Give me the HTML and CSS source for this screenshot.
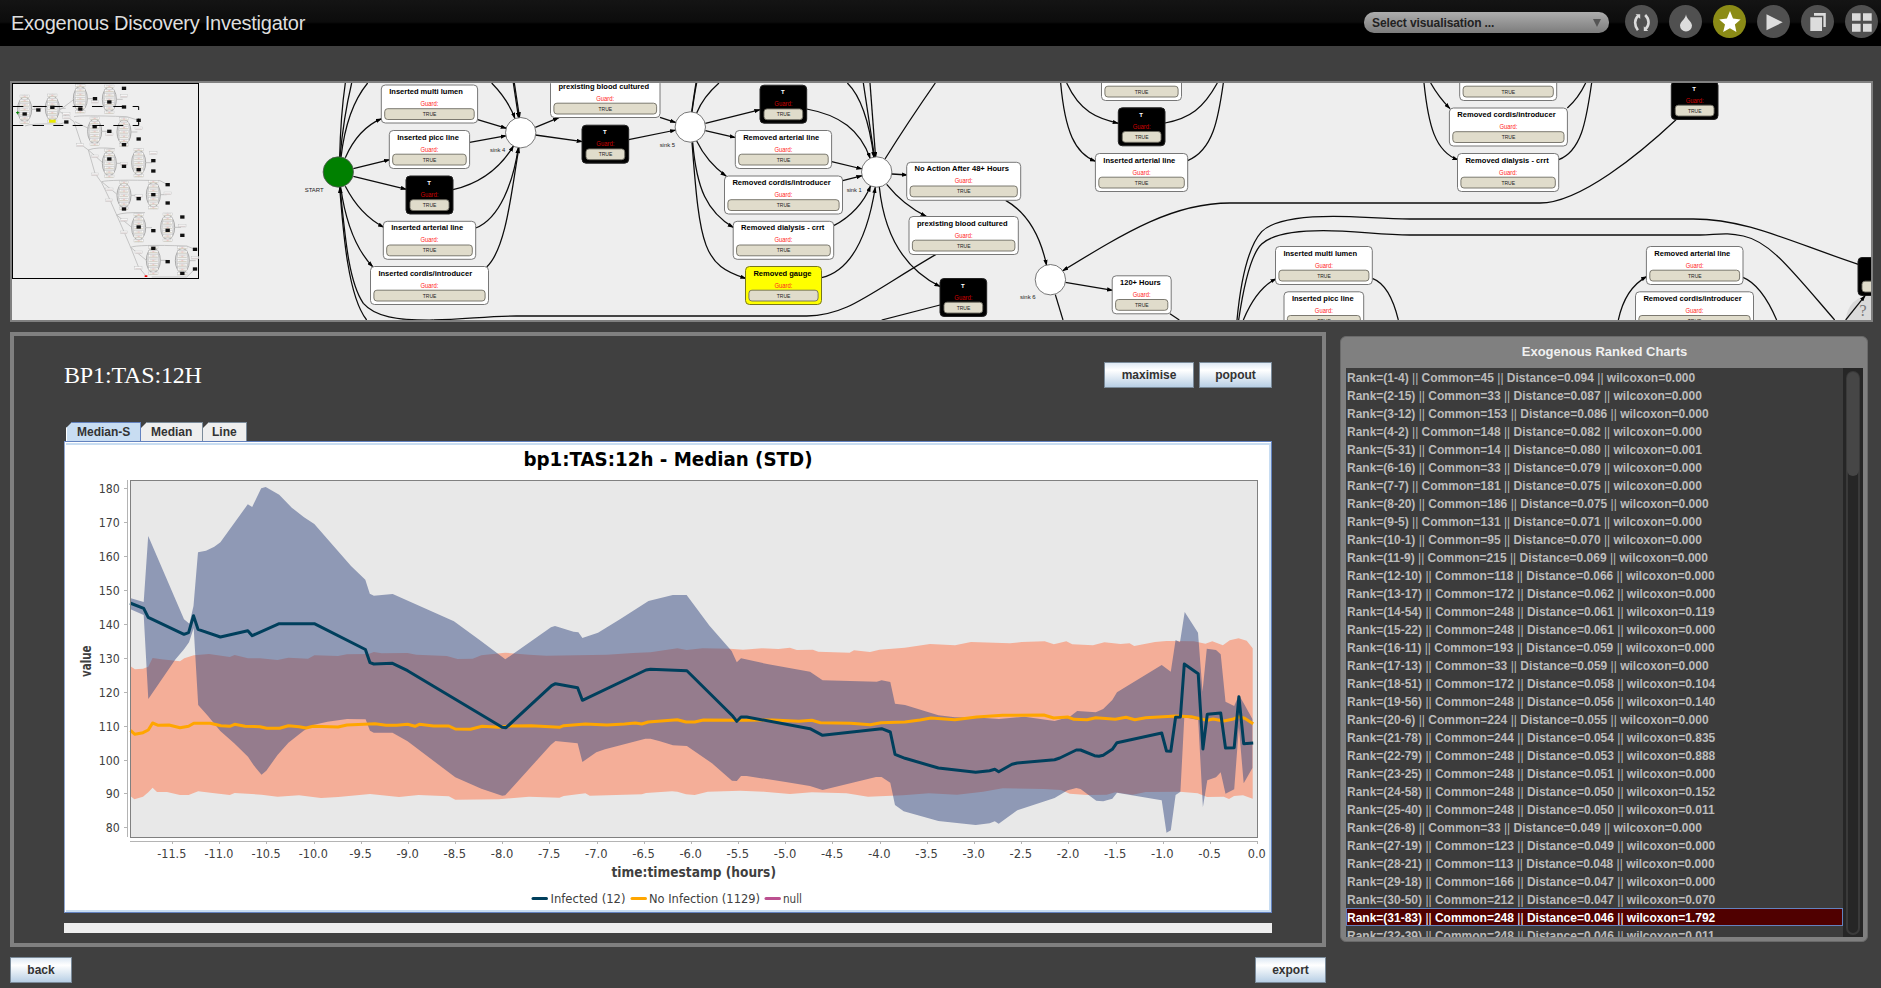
FILE: index.html
```html
<!DOCTYPE html>
<html lang="en">
<head>
<meta charset="utf-8">
<title>Exogenous Discovery Investigator</title>
<link rel="stylesheet" href="styles.css">
</head>
<body>
<header class="topbar">
  <h1 class="app-title">Exogenous Discovery Investigator</h1>
  <div class="combo"><span class="combo-text">Select visualisation ...</span><svg class="combo-arrow" viewBox="0 0 8 8"><path d="M0 0H8L4 8Z"/></svg></div>
  <nav class="tools">
    <svg class="tool" viewBox="0 0 33 33"><circle cx="16.5" cy="16.5" r="16.5"/><path class="arc" d="M13.4 10.8C9 14.2 9.2 20.6 12.9 25.2M20.2 10C24.6 14.4 24.6 20.4 20.6 24"/><path class="ink" d="M10.6 9.2H15.2V14ZM23.2 26H18.8V21.200Z"/></svg>
    <svg class="tool" viewBox="0 0 33 33"><circle cx="16.5" cy="16.5" r="16.5"/><path class="ink" d="M17 9.2C17.4 14 23 16.5 23 20.6A6 5.9 0 0 1 11 20.6C11 16.5 16.6 14 17 9.2Z"/></svg>
    <svg class="tool on" viewBox="0 0 33 33"><circle cx="16.5" cy="16.5" r="16.5"/><path class="ink" d="M17 6L20 13.4L27.6 14.6L21.9 19.4L23.4 27L16.9 23.2L10.2 27L12 19.4L6.2 14.6L13.9 13.4Z"/></svg>
    <svg class="tool" viewBox="0 0 33 33"><circle cx="16.5" cy="16.5" r="16.5"/><path class="ink" d="M9.5 9.3L25.7 17.3L9.5 25.3Z"/></svg>
    <svg class="tool" viewBox="0 0 33 33"><circle cx="16.5" cy="16.5" r="16.5"/><path class="ink" d="M13 8H24.8V22H22.4V10.8H13ZM9.3 12.2H21V26H9.3Z"/></svg>
    <svg class="tool" viewBox="0 0 33 33"><circle cx="16.5" cy="16.5" r="16.5"/><path class="ink" d="M7 8.3H15.6V15.8H7ZM18 8.3H26.7V15.8H18ZM7 18.7H15.6V26.8H7ZM18 18.7H26.7V26.8H18Z"/></svg>
  </nav>
</header>

<section class="graph-panel"><svg id="graph" class="graph" viewBox="12 83 1859 237"></svg></section>

<main class="workspace">
  <div class="left">
    <section class="chart-panel">
      <div class="chart-head">
        <h2 class="series-title">BP1:TAS:12H</h2>
        <button class="btn maximise">maximise</button>
        <button class="btn popout">popout</button>
      </div>
      <div class="tabs">
        <div class="tab active">Median-S</div>
        <div class="tab t2">Median</div>
        <div class="tab t3">Line</div>
      </div>
      <div class="pane"><div class="pane-inner"><svg id="chart" class="chart" viewBox="66 445 1203 465"></svg></div></div>
      <div class="strip"></div>
    </section>
    <footer class="actions"><button class="btn back">back</button><button class="btn export">export</button></footer>
  </div>
  <aside class="ranks">
    <h3 class="ranks-title">Exogenous Ranked Charts</h3>
    <div class="ranks-body">
      <ul id="list" class="rank-list"></ul>
      <div class="scroll"><div class="track"><div class="thumb"></div></div></div>
    </div>
  </aside>
</main>
<script src="app.js"></script>
</body>
</html>
```

FILE: styles.css
```css
* { box-sizing: border-box; }
body { margin: 0; width: 1881px; height: 988px; overflow: hidden; background: #404040; font-family: "Liberation Sans", Arial, sans-serif; }
h1, h2, h3, ul { margin: 0; padding: 0; font-weight: normal; }

.topbar { display: flex; align-items: flex-start; height: 46px; padding: 0 3px 0 11px; background: linear-gradient(#141414 0, #0c0c0c 22px, #000 24px); }
.app-title { flex: 1; font-size: 20px; line-height: 46px; color: #dedede; letter-spacing: -0.26px; white-space: nowrap; }
.combo { display: flex; align-items: center; justify-content: space-between; width: 245px; height: 21px; margin-top: 12px; padding: 0 8px; border-radius: 10px; background: linear-gradient(#adadad, #7c7c7c); }
.combo-text { font-size: 12px; font-weight: bold; letter-spacing: -.1px; color: #222; white-space: nowrap; }
.combo-arrow { width: 8px; height: 8px; fill: #555; }
.tools { display: flex; gap: 11px; margin: 5px 0 0 16px; }
.tool { width: 33px; height: 33px; }
.tool circle { fill: #505050; }
.tool .ink { fill: #dcdcdc; }
.tool .arc { fill: none; stroke: #dcdcdc; stroke-width: 2.6; }
.tool.on circle { fill: #8b8b16; }
.tool.on .ink { fill: #fff; }

.graph-panel { width: 1863px; height: 241px; margin: 35px 0 0 10px; border: 2px solid #808080; background: #eee; }
.graph { display: block; width: 1859px; height: 237px; }
.edge { fill: none; stroke: #0c0c0c; stroke-width: 3.8; }
.place { fill: #fff; stroke: #555; stroke-width: .8; }
.place.start { fill: #008000; }
.box { fill: #fff; stroke: #777; stroke-width: 1; }
.silent .box { fill: #000; stroke: #222; }
.hot .box { fill: #ff0; stroke: #77771c; }
.pill { fill: #e0dccb; stroke: #6e6c62; stroke-width: .9; }
.name { font-size: 7.6px; font-weight: bold; fill: #000; }
.silent .name { fill: #fff; font-size: 6px; }
.guard { font-size: 6.3px; fill: #f22; }
.silent .guard { fill: #d00000; }
.true { font-size: 5.6px; fill: #222; }
.sink { font-size: 6.2px; fill: #222; }
.help { fill: #dadada; }
.help-mark { font-family: "Liberation Serif", serif; font-size: 16px; fill: #777; }

.workspace { display: flex; gap: 14px; margin: 10px 0 0 10px; }
.left { width: 1316px; }
.chart-panel { height: 615px; border: 4px solid #808080; padding: 26px 50px 0; }
.chart-head { display: flex; align-items: flex-start; height: 60px; }
.series-title { flex: 1; font-family: "Liberation Serif", serif; font-size: 24px; line-height: 27px; color: #fff; letter-spacing: -.15px; }
.btn { height: 26px; padding: 0; border: 1px solid #7a8a99; background: linear-gradient(#dde8f3, #fff 30%, #b8cfe5); font: bold 12px "Liberation Sans", Arial, sans-serif; color: #333; }
.maximise { width: 90px; }
.popout { width: 73px; margin-left: 5px; }
.tabs { display: flex; height: 19px; padding-left: 2px; }
.tab { height: 19px; border: 1px solid #7a8a99; border-bottom: 0; border-left: 0; background: #eee; width: 62px; padding-left: 10px; font-size: 12px; font-weight: bold; line-height: 18px; color: #333; clip-path: polygon(0 6px, 6px 0, 100% 0, 100% 100%, 0 100%); }
.tab.active { width: 75px; padding-left: 10px; background: #c8ddf2; border-color: #6382bf; border-left: 1px solid #fff; }
.tab.t3 { width: 44px; padding-left: 9px; }
.pane { height: 472px; border: 1px solid #6382bf; border-left-color: #8fa6d0; padding: 1px 0 0 1px; background: #fff; }
.pane-inner { height: 469px; border: solid #c8ddf2; border-width: 2px 2px 2px 0; }
.chart { display: block; width: 1203px; height: 465px; font-family: "DejaVu Sans Condensed", "DejaVu Sans", sans-serif; }
.strip { height: 10px; margin-top: 10px; background: #eee; }
.actions { display: flex; justify-content: space-between; margin-top: 10px; }
.back { width: 62px; }
.export { width: 71px; }

.plot { fill: #e8e8e8; }
.frame { fill: none; stroke: #808080; }
.axis { fill: none; stroke: #b4b4b4; }
.tick { font-size: 12px; fill: #404040; }
.caption { font-size: 14px; font-weight: bold; fill: #404040; }
.heading { font-size: 20px; font-weight: bold; fill: #000; }
.band-none { fill: #f4ae98; }
.band-inf { fill: rgba(54, 74, 130, .5); }
.line { fill: none; stroke-width: 3; stroke-linejoin: round; }
.c-inf { stroke: #003f5c; }
.c-none { stroke: #ffa600; }
.c-null { stroke: #bc5090; }

.ranks { width: 528px; height: 606px; margin-top: 4px; padding: 0 4px 0 5px; border: 1px solid #6a6a6a; border-radius: 6px; background: #808080; }
.ranks-title { height: 31px; font-size: 13px; font-weight: bold; line-height: 29px; text-align: center; color: #f0f0f0; }
.ranks-body { display: flex; height: 569px; overflow: hidden; background: #3c3c3c; }
.rank-list { width: 497px; list-style: none; }
.rank-list li { height: 18px; padding-left: 1px; font-size: 12px; font-weight: bold; line-height: 20px; color: #bbb; white-space: nowrap; }
.rank-list li.sel { padding-left: 0; border: 1px solid #6382bf; line-height: 18px; background: #500000; color: #fff; }
.bar { font-weight: normal; }
.scroll { width: 20px; padding: 3px 3px 2px; background: #262626; }
.track { height: 564px; border: 2px solid #3a3a3a; border-radius: 7px; }
.thumb { height: 104px; margin: -1px; border-radius: 6px; background: #464646; }
```

FILE: app.js
```javascript
// ---------- process graph ----------
const WIDTHS = {
  'Inserted multi lumen': 73.7, 'Inserted picc line': 61.7, 'Inserted arterial line': 72,
  'Inserted cordis/introducer': 93.7, 'prexisting blood cultured': 90.7, 'Removed arterial line': 76,
  'Removed cordis/introducer': 98.3, 'Removed dialysis - crrt': 83.3, 'Removed gauge': 58,
  'No Action After 48+ Hours': 94.3, '120+ Hours': 40.7
};
const NODES = [
  [381.3, 85, 96.3, 'Inserted multi lumen'], [389.3, 130.5, 80.3, 'Inserted picc line'], [406, 176, 47, 'T'],
  [383.3, 221.3, 92.4, 'Inserted arterial line'], [370.5, 266.5, 118, 'Inserted cordis/introducer'],
  [550.5, 79.5, 109.5, 'prexisting blood cultured'], [582, 125.2, 46.7, 'T'],
  [760, 85.2, 46.7, 'T'], [735.3, 130.5, 96.3, 'Removed arterial line'], [724.5, 176, 118, 'Removed cordis/introducer'],
  [733.2, 221.3, 100.5, 'Removed dialysis - crrt'], [745.5, 266.5, 76, 'Removed gauge', 'hot'],
  [906.7, 162.3, 114, 'No Action After 48+ Hours'], [909, 216.5, 109.3, 'prexisting blood cultured'], [940, 278.5, 46.7, 'T'],
  [1101.5, 62.5, 80, ''], [1118.3, 107.8, 46.7, 'T'], [1095.4, 153.5, 92.3, 'Inserted arterial line'],
  [1112.2, 275.8, 59, '120+ Hours'], [1275.5, 246.5, 96.8, 'Inserted multi lumen'], [1284, 291.8, 79.7, 'Inserted picc line'],
  [1459.7, 62.5, 97, ''], [1449.4, 108, 118, 'Removed cordis/introducer'], [1457.5, 153.5, 101.2, 'Removed dialysis - crrt'],
  [1671.3, 81.5, 46.7, 'T'], [1646.4, 246.5, 96.6, 'Removed arterial line'], [1635.5, 291.8, 118, 'Removed cordis/introducer']
];
// Each group has its own origin; a leading ">" gives the edge an arrowhead.
const EDGES = [
  [300, ['M119 247Q122 120 136 24', 'M120 247Q130 130 155 24', 'M123 247Q140 100 203 24', '>M136 248Q175 160 245 131', '>M160 281L270 254',
    '>M160 304L320 343', '>M136 334Q180 420 252 457', '>M122 336Q145 500 219 576', '>M200 735C145 665 130 480 119 336',
    '>M400 735C290 736 225 725 190 685C145 620 135 480 120 336', 'M400 735C500 733 560 723 650 723L1520 723C1640 722 1700 660 1908 538',
    '>M533 134L620 160', '>M509 202L620 182', '>M459 344C540 325 600 280 641 212', '>M527 459C600 430 640 320 655 217',
    '>M560 576C620 520 635 340 657 217', '>M575 24Q625 75 645 131', '>M640 24L656 130', '>M643 24L659 130',
    '>M706 157L777 128', '>M706 180L848 200', '>M1080 127L1128 143', '>M986 194L1128 165']],
  [680, ['M35 111Q42 60 48 24', 'M36 111Q43 60 50 24', 'M50 114Q70 65 117 24', '>M76 145L241 104', '>M76 167L167 188', '>M50 198Q80 260 139 304',
    '>M38 202C50 340 80 410 161 458', '>M36 202C60 520 70 570 199 611', '>M380 102C480 120 540 165 571 251', '>M455 260L547 282',
    '>M488 317L547 302', '>M461 452Q540 410 572 332', '>M425 608C520 585 565 470 586 336', '>M502 24Q560 80 582 249',
    '>M550 24L584 249', '>M570 24L587 249', 'M615 252C660 180 720 90 766 24', '>M636 297L684 300', '>M620 328Q670 390 739 424',
    '>M598 336C615 500 690 590 781 635', '>M977 376Q1070 430 1100 572', 'M780 690L605 735']],
  [1040, ['>M76 622L219 646', 'M46 659L69 735', '>M80 24C120 110 170 130 236 145', '>M62 24C75 170 105 235 167 259',
    'M375 144C450 130 490 100 532 24', 'M443 257C520 225 535 130 550 24', '>M1908 134C1800 235 1620 384 1500 384L570 384C400 384 260 470 67 588',
    'M591 735C600 640 620 520 665 470C700 435 780 424 880 424C960 424 1020 431 1110 432L1960 432C2120 432 2250 500 2455 568',
    'M596 735C610 640 630 540 665 507C700 475 780 467 850 467C940 467 1020 479 1110 480L1980 480C2040 478 2060 472 2110 483C2190 500 2250 580 2384 735',
    '>M610 735Q650 640 709 611', 'M390 716L418 735', 'M997 610Q1050 630 1075 735']],
  [1400, ['>M72 24C85 150 105 230 175 255', '>M92 24Q115 65 150 101', 'M502 99Q535 70 557 24', 'M476 254C550 225 560 120 575 24',
    '>M655 735Q675 640 741 604', 'M1029 607Q1085 630 1130 735']]
];
const PLACES = [[338.3, 172, 'START', 304.7, 191.7, 19], [520.7, 132.7, 'sink 4', 490, 152.3, 15.3], [690.3, 127, 'sink 5', 659.7, 146.7, 15.3],
  [876.7, 172, 'sink 1', 846.7, 192, 15], [1050.4, 279.7, 'sink 6', 1020, 299.3, 15.6]];

function nodeSvg([x, y, w, label, kind]) {
  const silent = label === 'T';
  const cx = x + w / 2;
  const inset = silent ? 4 : 3.4;
  let text = '';
  if (silent) text = `<text class="name" x="${cx - .5}" y="${y + 9}" text-anchor="middle">T</text>`;
  else if (label) text = `<text class="name" x="${x + 7.9}" y="${y + 9}" textLength="${WIDTHS[label]}" lengthAdjust="spacingAndGlyphs">${label}</text>`;
  if (label) text += `<text class="guard" x="${cx - 9}" y="${y + 21}" textLength="18" lengthAdjust="spacingAndGlyphs">Guard:</text>`;
  return `<g class="${silent ? 'silent' : kind || ''}"><rect class="box" x="${x}" y="${y}" width="${w}" height="38" rx="4"/>${text}
    <rect class="pill" x="${x + inset}" y="${y + 23.7}" width="${w - inset * 2}" height="10.8" rx="3"/>
    <text class="true" x="${cx - 6.7}" y="${y + 31}" textLength="13.6" lengthAdjust="spacingAndGlyphs">TRUE</text></g>`;
}

function minimap() {
  const ovals = [[74, 328], [157, 325], [241, 296], [328, 298], [284, 394], [372, 396], [328, 490], [416, 488], [372, 586], [460, 584], [416, 683], [503, 682], [460, 781], [547, 782]];
  const black = [[74, 342], [115, 330], [157, 322], [199, 366], [241, 327], [285, 296], [328, 306], [372, 265], [372, 321], [416, 361], [284, 380], [328, 394], [372, 434], [416, 417], [328, 477], [372, 499], [416, 509], [460, 482], [460, 513], [416, 596], [372, 627], [460, 584], [503, 554], [503, 609], [416, 681], [460, 692], [503, 691], [547, 651], [547, 706], [460, 745], [503, 785], [547, 820], [585, 748], [585, 807]];
  const small = [[240, 435], [285, 523], [327, 601], [372, 697], [415, 804], [199, 342], [199, 352], [372, 288], [416, 385], [460, 459], [503, 580], [547, 677], [585, 773], [285, 469], [328, 568], [372, 660], [416, 757], [115, 322], [285, 305], [328, 403], [372, 491], [416, 588]];
  let s = '<g transform="scale(.33333)"><rect x="37.5" y="250.5" width="558" height="585" fill="#eee" stroke="#000" stroke-width="3"/>';
  s += '<path d="M222 365L245 435L265 450L285 520L305 548L330 600L350 645L372 695L392 742L415 800L438 828M180 330L222 298M180 335L222 365M222 350Q240 345 380 350L416 361M265 450Q290 440 345 446M305 545Q330 538 480 542L503 554M350 645Q370 636 435 638M392 742Q410 733 560 738L585 748M455 831H560L585 807M225 365L265 385M265 450L308 488M305 545L350 582M350 645L395 682M392 742L438 780M75 378Q90 370 180 372L199 366" fill="none" stroke="#b4b4b4" stroke-width="2.200"/>';
  for (const [x, y] of ovals) {
    s += `<ellipse cx="${x}" cy="${y}" rx="21" ry="37" fill="none" stroke="#999" stroke-width="2.500"/><ellipse cx="${x}" cy="${y}" rx="17" ry="42" fill="none" stroke="#bbb" stroke-width="2"/>`;
    for (let k = -3; k <= 3; k++) s += `<rect x="${x - 14}" y="${y + k * 13 - 4}" width="28" height="8" fill="#fafafa" stroke="#b0b0b0"/><path d="M${x - 12} ${y + k * 13 + 2.5}h24" stroke="#cdc6b0" stroke-width="2"/><path d="M${x - 10} ${y + k * 13 - 2}h20" stroke="#aaa" stroke-width="1"/><path d="M${x - 3} ${y + k * 13}h6" stroke="#e99" stroke-width="1.500"/>`;
    s += `<path d="M${x + 22} ${y}h18" stroke="#aaa" stroke-width="2"/>`;
  }
  for (const [x, y] of small) s += `<rect x="${x - 11}" y="${y - 4}" width="22" height="8" fill="#f6f6f6" stroke="#b8b8b8"/><path d="M${x - 9} ${y + 2}h18" stroke="#cbb" stroke-width="2"/>`;
  for (const [x, y] of black) s += `<rect x="${x - 6.5}" y="${y - 5}" width="13" height="10" fill="#111"/>`;
  s += '<rect x="147" y="359" width="20" height="9" fill="#e8e800"/><path d="M434 826h8v5h-8z" fill="#e00"/><path d="M48 338h10M53 334v9" stroke="#008000" stroke-width="3"/>';
  s += '<path d="M38 319.500H70M98 319.500H140M160 319.500H188M218 319.500H248M276 319.500H308M340 319.500H372M398 319.500H416V330M416 356V372M38 376.500H70M98 376.500H132M160 376.500H190M218 376.500H248M278 376.500H312M340 376.500H370M398 376.500H416V370" fill="none" stroke="#000" stroke-width="3"/></g>';
  return s;
}

let g = '<defs><marker id="tip" viewBox="0 0 18 12" refX="17" refY="6" markerWidth="19" markerHeight="13" markerUnits="userSpaceOnUse" orient="auto"><path d="M0 0L18 6L0 12Z"/></marker></defs>';
g += '<path class="help" d="M1846 320A25 25 0 0 1 1871 295V320Z"/>';
for (const [ox, paths] of EDGES) {
  g += `<g transform="translate(${ox} 75) scale(.33333)">` + paths.map(p => {
    const arrow = p[0] === '>';
    return `<path class="edge" d="${arrow ? p.slice(1) : p}"${arrow ? ' marker-end="url(#tip)"' : ''}/>`;
  }).join('') + '</g>';
}
for (const [x, y, t, tx, ty, tw] of PLACES)
  g += `<circle class="place ${t === 'START' ? 'start' : ''}" cx="${x}" cy="${y}" r="15.2"/><text class="sink" x="${tx}" y="${ty}" textLength="${tw}" lengthAdjust="spacingAndGlyphs">${t}</text>`;
g += NODES.map(nodeSvg).join('');
// Node running off the right edge: only its left part is in view.
g += '<g class="silent"><rect class="box" x="1858" y="257.500" width="46.700" height="38" rx="4"/><rect class="pill" x="1862" y="281.200" width="38.700" height="10.800" rx="3"/></g>';
g += '<g transform="translate(1400 75) scale(.33333)"><path class="edge" d="M1337 735L1396 661" marker-end="url(#tip)"/></g><text class="help-mark" x="1859.500" y="316">?</text>';
g += minimap();
document.getElementById('graph').innerHTML = g;

// ---------- chart ----------
const infected = '130,603 143.7,608.3 148.2,617.3 184,634.3 188.6,632.7 193.5,615.7 198,629.3 220.4,637 247.8,630.7 252.2,635.7 279.2,623.7 314.3,623.7 365.4,649.5 370,662.7 373.8,664 392.5,663.3 407.6,670.7 502.2,727.3 506,727.7 551.6,685.7 555.5,683.7 577.6,687.7 582.4,700.3 646,670 650.5,669.3 686.9,670.7 732.9,716.3 736.8,721.3 741,717 746.7,717 810,728.7 822.6,735.3 881.6,728.7 890.3,732 895,754.3 905,758.3 938.4,768 975.7,772.3 989.6,770.7 994.8,769.3 998.7,771.7 1012,764.3 1017.3,763 1054.6,759.7 1059.8,758 1076.3,750 1080.6,750 1094.5,755.7 1098.9,756.3 1103.2,755.3 1112.3,749.3 1117,742.7 1161.7,733 1166.5,751 1170.8,751.3 1175.6,717.3 1180.4,717 1184.3,664 1198.2,673.7 1202.9,749 1207.3,714.3 1220.7,713 1225.5,748 1234.2,747.7 1238.9,696.7 1243.7,743.7 1253.2,743';
const infectedBand = '130,598 143.7,602 148.2,536 184,619.3 189.4,623.7 193.5,606 198,552.3 206,550.7 214.3,546.7 220.4,542.3 247.8,504.3 252.2,507 261.2,488.3 265.7,487 279.2,494.7 291.8,507.7 304,517.3 314.3,524 351,566 365.3,579.7 369.8,593.7 373.9,595.7 392.7,594 453.9,621.3 479.6,640 505.3,659.3 551,627.3 555,626 573.5,631.7 578.4,632.3 582.4,638 598,632.7 620,619.3 648.5,601 672.8,595 686.6,595 709.5,625.7 731.6,651 736.8,662.3 741,658.3 768.4,664.3 810,671.7 822.6,680.3 876.8,681.7 881.6,680.3 890.3,682 895,703.7 905,705 938.4,715.3 954.9,717.3 980.9,717.7 999,719 1024.3,716.7 1054.6,721 1069.8,716.7 1077.2,711 1095.8,712.3 1103.2,709 1112.3,700 1117,692.3 1161.7,665 1170.8,671.7 1175.6,640 1180,642.3 1184.7,612 1198,632.7 1202.5,691.7 1206.8,648.7 1216,650 1220.7,654.3 1225.5,701.7 1234.2,706 1238.9,695 1243.7,703.3 1252.4,719 1252.4,768 1243.7,783.3 1238.9,727 1234.2,789.3 1225.5,793.7 1220.7,772.3 1216,777.3 1207.3,780.3 1202.9,807 1198.2,720 1184.3,717.3 1180.4,791.7 1175.6,795 1170.8,830.3 1166.5,832.7 1161.7,800.3 1117,792.7 1112.3,798.7 1103.2,801.3 1096.3,800.7 1080.6,789 1076.3,788 1067.6,790.3 1054.6,798 1017.3,810.3 998.7,823.7 994.8,821.3 989.6,823.3 975.7,825 938.4,821 903.7,811.3 895,805 890.3,782.7 881.6,777 876,777 822.6,790 810,786 785.8,782 746.7,776 741,776 736.8,781 732,780.7 712,763.3 686.9,746 673,745.3 660,741.3 650.5,738.7 645.3,738.7 605,749.3 596.3,752.3 582.4,762 577.6,743.3 555.5,741 550.7,745 505.2,795.3 502.2,795.7 481.4,788.7 455.3,777.3 407.6,741.3 392.5,732.7 373.8,732.7 370,730.7 365.6,719.3 347,719 327.4,721.7 313,725 303.6,730.7 288.4,742.7 277.5,755 266.3,770.7 261.5,774.7 253.7,765.3 248,756.7 234.2,743.3 220.3,731 208,716 198.2,705 193.7,628 189,642.3 184,649.3 175.5,659.3 148.3,699 143.7,615 130,609';
const clearBand = '130.5,666.3 134.9,669.3 143,668.7 148.3,666.7 152.6,658 161.3,659.3 180,661.3 184.3,658.3 193.8,655.3 209,654 229.8,657 234.6,655 248,658.3 260,658.3 277.5,660 288.4,657.7 308,658.7 314.4,655.3 338,656 347,654.3 368.6,654 373.8,652 381.6,653.3 407.6,653 416.3,654.7 446.7,656 457.5,659 472.7,658.7 481.4,655.3 505.2,652.7 529,654.7 546.4,655.7 576.8,655.3 607,654.7 633,653 650.5,652.3 677.4,648.3 686.6,650 702.6,648.3 730,648.7 743,649.7 762,648.3 778.4,649 789.9,647.7 796.8,650 812.8,649.7 818.3,651.7 849.6,652.7 854,650.3 870,652 879.4,649.7 904.7,647.7 930,644 955,645.3 971,642 1010,643.3 1021.7,642 1044.7,641.3 1053.9,644.3 1066.3,641.3 1072.3,644.3 1093,645.3 1104.4,642.3 1120.5,644 1129.6,643.3 1134.2,646 1155,642 1166.4,641 1194,641.3 1205.4,643.7 1212.3,641.3 1222.9,645.3 1229.8,640.3 1238.5,638.3 1246.7,640.7 1252.7,648.3 1252.7,798.7 1243,795.3 1234,796 1229,799 1223.7,796.7 1207,797 1197.7,793.3 1180,791.7 1145.7,792 1132.7,794.7 1115.3,792.3 1106.7,794.7 1087,795 1069.8,793.7 1061,790 1043.8,789 1002.6,788.3 983,791.7 957,794.7 928.9,793.3 902.8,795.3 868,796.7 846.5,793.3 811.8,792.3 790,794 764,791.7 740.2,790.7 707.7,791.7 694.7,795 686,794.3 677.3,791.7 672,791.3 646,793 641.8,794.3 589.8,795.7 585.4,793.3 563.7,796 559.4,797.7 529,796.7 498.7,799.3 455.3,799.7 448.8,796.3 418.5,795 399,797 370,794 338.2,797 321,798 299,795.3 277.5,796.7 261.5,794.7 234.6,793 229.8,795 214.7,793.3 198.2,791.3 188.6,795 180,795 167,792 157,792 152.6,787.7 148.3,792.3 143,796.7 134.4,799.3 130.5,796.3';
const clear = '130.5,730.3 134.9,734.3 143,732.7 148.3,730 152.6,723 158.3,725.3 169,725 180,727.7 188.6,726.3 193.8,723.3 210.3,723.3 221,725.7 229.8,726.3 234.6,724.3 245,726.3 260,726.7 266.7,728.3 279.7,728.3 288.4,725.7 299.2,726.7 306,728 313,726.3 338,727 347,725 375,723.7 386,725.3 396.8,725.3 407.6,724.3 415,726.3 419.3,724.3 433.7,726 448.8,726 455.3,729 470.5,729.3 482.2,726.3 498.7,727.3 509.5,726 531.2,725.7 559.4,727.3 563.7,725.7 585.4,724 607,725 624.5,724 635.3,723 641.8,724 648.3,722 677.3,719.7 686,722 694.7,722 703.4,720 746.7,720.3 772.7,720 798.8,721.3 811.8,720.3 820.4,722.7 850.8,723.3 870.3,724.7 881,722.7 905,722 920,720 931,718 954.9,719.7 976.6,717 1002.6,715.3 1043.8,715 1053.7,718 1067.6,717 1074,719.3 1087,719.7 1095.8,717.7 1115.3,719.3 1126,717.3 1134.8,719.7 1145.7,717.7 1163,716.7 1176,716 1191.2,716.7 1200,718.7 1207.3,720.3 1213,719 1223.7,721 1232.4,719.3 1238.9,716.7 1244.6,718.3 1253.2,723.7';

let c = '<text class="heading" x="523.500" y="466" textLength="289" lengthAdjust="spacingAndGlyphs">bp1:TAS:12h - Median (STD)</text>';
c += '<rect class="plot" x="130" y="480" width="1127" height="357"/>';
c += `<polygon class="band-none" points="${clearBand}"/><polygon class="band-inf" points="${infectedBand}"/>`;
c += `<polyline class="line c-none" points="${clear}"/><polyline class="line c-inf" points="${infected}"/>`;
c += '<rect class="frame" x="130.500" y="480.500" width="1127" height="357"/>';
let axes = 'M127.500 480V837M130 841.500H1258';
for (let i = 0; i <= 10; i++) {
  const y = Math.round(488.3 + i * 33.9);
  const v = 180 - i * 10;
  axes += `M124 ${y + .5}H127`;
  const w = v >= 100 ? 21 : 14;
  c += `<text class="tick" x="${119.8 - w}" y="${y + 5}" textLength="${w}" lengthAdjust="spacingAndGlyphs">${v}</text>`;
}
for (let i = 0; i <= 23; i++) {
  const x = 172.6 + i * 47.17;
  const label = (i === 23 ? 0 : -11.5 + i * .5).toFixed(1);
  const w = i < 4 ? 29 : i < 23 ? 22.5 : 18;
  axes += `M${Math.floor(x) + .5} 841V844`;
  c += `<text class="tick" x="${x - w / 2 - .8}" y="858" textLength="${w}" lengthAdjust="spacingAndGlyphs">${label}</text>`;
}
c += `<path class="axis" d="${axes}"/>`;
c += '<text class="caption" x="611.500" y="877" textLength="164.500" lengthAdjust="spacingAndGlyphs">time:timestamp (hours)</text>';
c += '<text class="caption" transform="translate(91 677) rotate(-90)" textLength="31.500" lengthAdjust="spacingAndGlyphs">value</text>';
for (const [cls, lx, tx, tw, t] of [['c-inf', 533, 550.5, 75, 'Infected (12)'], ['c-none', 632, 649, 111, 'No Infection (1129)'], ['c-null', 766, 783, 19, 'null']])
  c += `<path class="line ${cls}" stroke-linecap="round" d="M${lx} 898.500h13.500"/><text class="tick" x="${tx}" y="903" textLength="${tw}" lengthAdjust="spacingAndGlyphs">${t}</text>`;
document.getElementById('chart').innerHTML = c;

// ---------- ranked list ----------
const RANKS = [['1-4', 45, '0.094', '0.000'], ['2-15', 33, '0.087', '0.000'], ['3-12', 153, '0.086', '0.000'], ['4-2', 148, '0.082', '0.000'],
  ['5-31', 14, '0.080', '0.001'], ['6-16', 33, '0.079', '0.000'], ['7-7', 181, '0.075', '0.000'], ['8-20', 186, '0.075', '0.000'],
  ['9-5', 131, '0.071', '0.000'], ['10-1', 95, '0.070', '0.000'], ['11-9', 215, '0.069', '0.000'], ['12-10', 118, '0.066', '0.000'],
  ['13-17', 172, '0.062', '0.000'], ['14-54', 248, '0.061', '0.119'], ['15-22', 248, '0.061', '0.000'], ['16-11', 193, '0.059', '0.000'],
  ['17-13', 33, '0.059', '0.000'], ['18-51', 172, '0.058', '0.104'], ['19-56', 248, '0.056', '0.140'], ['20-6', 224, '0.055', '0.000'],
  ['21-78', 244, '0.054', '0.835'], ['22-79', 248, '0.053', '0.888'], ['23-25', 248, '0.051', '0.000'], ['24-58', 248, '0.050', '0.152'],
  ['25-40', 248, '0.050', '0.011'], ['26-8', 33, '0.049', '0.000'], ['27-19', 123, '0.049', '0.000'], ['28-21', 113, '0.048', '0.000'],
  ['29-18', 166, '0.047', '0.000'], ['30-50', 212, '0.047', '0.070'], ['31-83', 248, '0.046', '1.792'], ['32-39', 248, '0.046', '0.011']];
const BAR = ' <span class="bar">||</span> ';
document.getElementById('list').innerHTML = RANKS.map(([r, n, d, w]) =>
  `<li${r === '31-83' ? ' class="sel"' : ''}>${[`Rank=(${r})`, `Common=${n}`, `Distance=${d}`, `wilcoxon=${w}`].join(BAR)}</li>`).join('');
```
